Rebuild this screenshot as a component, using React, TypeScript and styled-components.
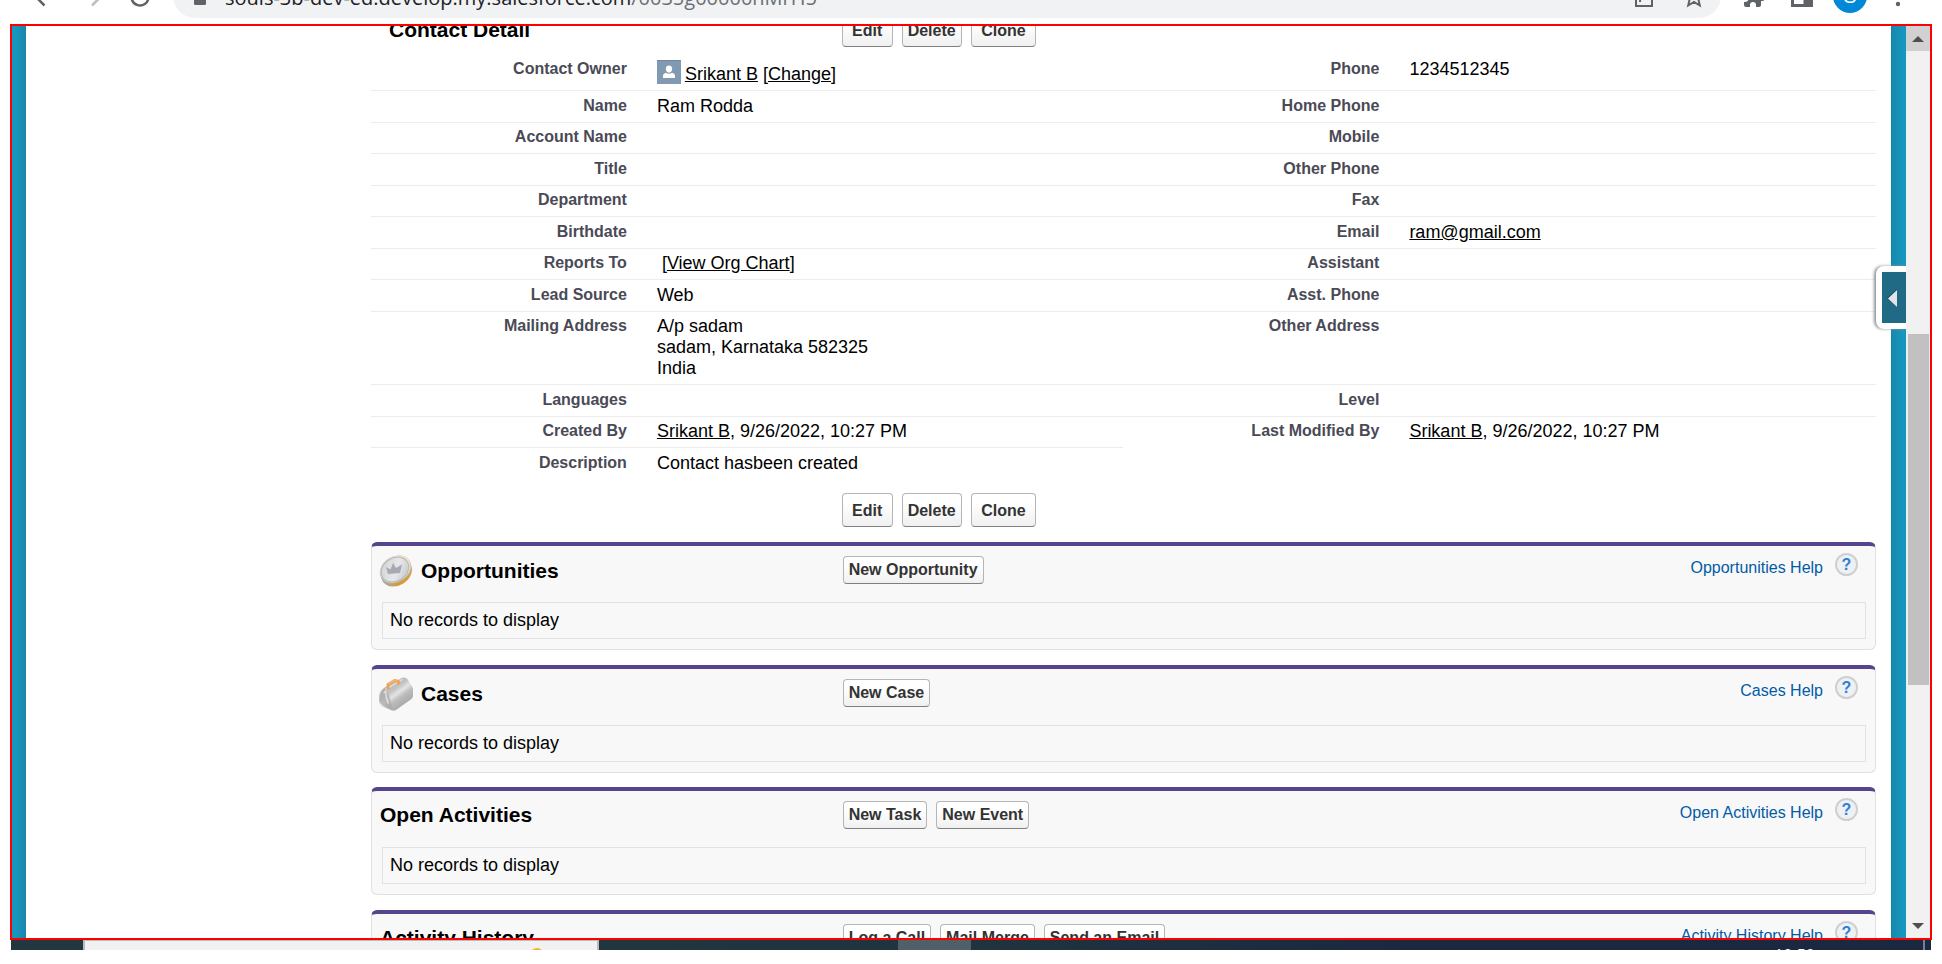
import React from 'react';
import styled, { createGlobalStyle } from 'styled-components';

const GlobalStyle = createGlobalStyle`
  *, *::before, *::after { box-sizing: border-box; }
  body {
    margin: 0;
    background: #fff;
    color: #000;
    font: 18px/21px Arial, "Liberation Sans", sans-serif;
    overflow: hidden;
  }
`;

const Screen = styled.div`
  display: flex;
  flex-direction: column;
  height: 100vh;
  padding-bottom: 14px;
`;

/* ---------- browser toolbar ---------- */

const BrowserBar = styled.header`
  display: flex;
  align-items: flex-end;
  flex: none;
  height: 24px;
  overflow: hidden;
`;

const Toolbar = styled.div`
  display: flex;
  align-items: center;
  flex: 1;
  height: 56px;
  padding: 0 20px;
`;

const ToolButton = styled.button`
  display: flex;
  align-items: center;
  justify-content: center;
  flex: none;
  width: 48px;
  height: 44px;
  padding: 0;
  border: 0;
  background: none;
`;

const AddressPill = styled.div`
  display: flex;
  align-items: center;
  flex: 1;
  height: 44px;
  margin: 0 9px;
  padding: 0 15px 0 21px;
  gap: 26px;
  border-radius: 22px;
  background: #f0f2f4;
`;

const Address = styled.div`
  display: flex;
  align-items: center;
  flex: 1;
  gap: 19px;
  color: #202124;
  font: 20px/28px "Open Sans", "Noto Sans", sans-serif;
`;

const AddressText = styled.span`
  padding-top: 4px;
`;

const AddressPath = styled.span`
  color: #6b6f74;
`;

const PillButton = styled.button`
  display: flex;
  padding: 0;
  border: 0;
  background: none;
`;

const Avatar = styled.span`
  display: flex;
  align-items: center;
  justify-content: center;
  width: 34px;
  height: 34px;
  border-radius: 50%;
  background: #0288d8;
  color: #fff;
  font-size: 20px;
`;

/* ---------- page frame ---------- */

const Frame = styled.div`
  position: relative;
  display: flex;
  flex: 1;
  min-height: 0;
  margin: 0 10px;
  border: 2px solid #ff0000;
`;

const Edge = styled.div<{ $side: 'left' | 'right' }>`
  flex: none;
  width: ${(p) => (p.$side === 'left' ? 14 : 15)}px;
  background: linear-gradient(
    to ${(p) => p.$side},
    #1787ab,
    #1797c0 80%
  );
`;

const Viewport = styled.main`
  flex: 1;
  min-width: 0;
  overflow: hidden;
  padding: 0 15px 0 345px;
`;

const Scrolled = styled.div`
  margin-top: -13px;
`;

/* ---------- buttons ---------- */

const ButtonRow = styled.div`
  display: flex;
  gap: 9px;
`;

const Button = styled.button<{ $large?: boolean }>`
  height: ${(p) => (p.$large ? 34 : 28)}px;
  padding: ${(p) => (p.$large ? 1 : 0)}px 5px 0;
  border: 1px solid #b5b5b5;
  border-bottom-color: #7f7f7f;
  border-radius: 4px;
  background: linear-gradient(#fff 30%, #f0f0f0);
  color: #333;
  font: bold 16px/20px Arial, "Liberation Sans", sans-serif;
  white-space: pre;
`;

/* ---------- contact detail ---------- */

const DetailBar = styled.div<{ $gap: number }>`
  display: flex;
  align-items: center;
  margin-bottom: ${(p) => p.$gap}px;
`;

const TitleCell = styled.div<{ $inset?: number }>`
  display: flex;
  align-items: center;
  gap: 8px;
  flex: none;
  width: calc(31% + 4px);
  padding-left: ${(p) => p.$inset ?? 0}px;
`;

const Heading = styled.h2`
  margin: 0;
  font-size: 21px;
  line-height: 24px;
`;

const DetailTable = styled.table`
  width: 100%;
  margin-bottom: 13px;
  border-spacing: 0;
  table-layout: fixed;
`;

const LabelCol = styled.col`
  width: 18%;
`;

const ValueCol = styled.col`
  width: 32%;
`;

const Row = styled.tr`
  & > * {
    height: 31px;
    padding: 4px 15px 5px;
    vertical-align: top;
  }
  &:nth-child(even) > * {
    height: 32px;
    padding-top: 5px;
  }
`;

const Label = styled.th<{ $line: boolean }>`
  border-bottom: ${(p) => (p.$line ? '1px solid #ececec' : '0')};
  color: #4a4a56;
  font-size: 16px;
  line-height: 19px;
  text-align: right;
`;

const Value = styled.td<{ $line: boolean }>`
  border-bottom: ${(p) => (p.$line ? '1px solid #ececec' : '0')};
`;

const TextLink = styled.a`
  color: #000;
  text-decoration: underline;
`;

const Owner = styled.div`
  display: flex;
  align-items: flex-end;
  gap: 4px;
  height: 26px;
`;

const OwnerIcon = styled.svg`
  flex: none;
  align-self: center;
`;

const Indent = styled.span`
  padding-left: 5px;
`;

/* ---------- related lists ---------- */

const Panel = styled.section`
  height: 108px;
  margin-bottom: 15px;
  border: 1px solid #e0e0e3;
  border-top: 4px solid #56458c;
  border-radius: 6px;
  background: #f8f8f8;
  &:nth-of-type(even) {
    margin-bottom: 14px;
  }
`;

const PanelBar = styled.div`
  display: flex;
  align-items: flex-start;
  height: 56px;
  padding: 0 17px 0 0;
`;

const PanelTitle = styled(TitleCell)<{ $tall: boolean }>`
  width: calc(31% + 10px);
  height: ${(p) => (p.$tall ? 50 : 48)}px;
`;

const PanelButtons = styled(ButtonRow)`
  flex: 1;
  padding-top: 10px;
`;

const HelpLink = styled.a`
  display: flex;
  align-items: flex-start;
  gap: 12px;
  padding-top: 7px;
  color: #015ba7;
  font-size: 16px;
  line-height: 29px;
  text-decoration: none;
`;

const HelpBadge = styled.span`
  display: flex;
  align-items: center;
  justify-content: center;
  width: 23px;
  height: 23px;
  border: 2px solid #cfcfcf;
  border-radius: 50%;
  background: #eef1f4;
  color: #2f7fd8;
  font-weight: bold;
  font-size: 16px;
  line-height: 20px;
`;

const Empty = styled.p`
  margin: 0 9px 0 10px;
  padding: 8px 7px;
  border: 1px solid #e0e3e5;
  line-height: 19px;
`;

/* ---------- scroll bar and drawer tab ---------- */

const ScrollBar = styled.div`
  display: flex;
  flex-direction: column;
  flex: none;
  width: 24px;
  background: #f1f1f1;
`;

const ScrollButton = styled.button<{ $active?: boolean }>`
  display: flex;
  align-items: center;
  justify-content: center;
  flex: none;
  height: 25px;
  padding: 0;
  border: 0;
  background: ${(p) => (p.$active ? '#d1d1d1' : '#f1f1f1')};
`;

const Track = styled.div<{ $grow: number }>`
  flex: ${(p) => p.$grow} 0 0;
`;

const Thumb = styled.div`
  flex: 351 0 0;
  margin: 0 1px 0 2px;
  background: #c1c1c1;
`;

const DrawerTab = styled.button`
  position: absolute;
  top: 240px;
  right: 24px;
  display: flex;
  width: 30px;
  height: 63px;
  padding: 6px 0 6px 6px;
  border: 0;
  border-radius: 8px 0 0 8px;
  background: #fff;
  box-shadow: -2px 0 3px #8f959b;
  clip-path: inset(-4px 0 -4px -6px);
`;

const DrawerFace = styled.span`
  display: flex;
  align-items: center;
  flex: 1;
  padding-left: 4px;
  background: #216a85;
`;

/* ---------- taskbar ---------- */

const TaskBar = styled.footer`
  display: flex;
  flex: none;
  height: 10px;
  margin: 0 11px;
  overflow: hidden;
  background: linear-gradient(to right, #22373f, #20343f 50%, #1a2840 75%);
`;

const SearchBox = styled.div`
  flex: none;
  width: 516px;
  height: 40px;
  margin-left: 72px;
  padding: 7px 53px 0 0;
  border: 2px solid #b9bcbd;
  border-top-width: 1px;
  background: #f1f1f1;
  text-align: right;
`;

const SearchArt = styled.svg`
  vertical-align: top;
`;

const ActiveTask = styled.div`
  flex: none;
  width: 73px;
  margin-left: 299px;
  background: #4f6068;
`;

const Clock = styled.time`
  flex: 1;
  padding: 5px 108px 0 0;
  color: #fff;
  font: 16px/21px "Open Sans", sans-serif;
  text-align: right;
`;

const DesktopEdge = styled.div`
  flex: none;
  width: 8px;
  border-left: 2px solid #76808f;
`;

/* ---------- drawings ---------- */

const CoinIcon = () => (
  <svg width="34" height="34" viewBox="0 0 34 34" aria-hidden="true">
    <defs>
      <linearGradient id="coinEdge" x1="0" y1="0" x2="1" y2="0">
        <stop offset="0" stopColor="#a9aaa8" />
        <stop offset="0.35" stopColor="#d9992f" />
        <stop offset="0.7" stopColor="#d99b3c" />
        <stop offset="1" stopColor="#c9b78e" />
      </linearGradient>
      <linearGradient id="coinFace" x1="0" y1="0" x2="1" y2="1">
        <stop offset="0" stopColor="#cfd1d3" />
        <stop offset="0.55" stopColor="#e6e7e9" />
        <stop offset="1" stopColor="#bfc2c6" />
      </linearGradient>
    </defs>
    <ellipse cx="17.500" cy="18.500" rx="16.500" ry="13" fill="url(#coinEdge)" transform="rotate(-32 17.500 18.500)" />
    <ellipse cx="16.500" cy="15.500" rx="16.500" ry="13" fill="#b4b6b6" transform="rotate(-32 16.500 15.500)" />
    <ellipse cx="16.500" cy="15" rx="16" ry="12.500" fill="#ece2c8" transform="rotate(-32 16.500 15)" />
    <ellipse cx="16" cy="15.500" rx="14.500" ry="11.500" fill="url(#coinFace)" stroke="#b5b7b9" transform="rotate(-32 16 15.500)" />
    <path d="M9 20 7 13l4.500 2.500L14 9l3 5 6-3.500-2 8.500z" fill="#a6aab0" />
  </svg>
);

const CaseIcon = () => (
  <svg width="34" height="36" viewBox="0 0 36 36" aria-hidden="true">
    <defs>
      <linearGradient id="caseBody" x1="0.2" y1="0.1" x2="0.8" y2="0.9">
        <stop offset="0" stopColor="#b4b4b4" />
        <stop offset="0.35" stopColor="#c2c2c2" />
        <stop offset="0.5" stopColor="#e4e4e4" />
        <stop offset="0.65" stopColor="#bdbdbd" />
        <stop offset="1" stopColor="#a2a2a2" />
      </linearGradient>
    </defs>
    <path d="M6 11 23 1.500Q27-.5 30 2l5 8q1 1 1 3v7q0 2-2 3.500L18 35q-2 1-4 .5L3 31Q0 29 0 26v-6q1-6 6-9z" fill="url(#caseBody)" />
    <path d="M6 12Q1 17 1 25q0 3 3 5l10 5q-1-12-6-20z" fill="#a8a8a8" opacity="0.7" />
    <path d="M7 13 25 2.500" stroke="#dcdcdc" strokeWidth="1.500" />
    <path d="M5 17l2-2q0 7 3 13" fill="none" stroke="#e0e0e0" strokeWidth="1.500" />
    <path d="M9.500 13V8L17 3.500l3.500 1V8" fill="none" stroke="#f0a04b" strokeWidth="3" strokeLinejoin="round" />
    <path d="M10 7.500 17 3l2.500.8" fill="none" stroke="#f8c48a" />
  </svg>
);

const PersonIcon = () => (
  <OwnerIcon width="24" height="24" viewBox="0 0 24 24" aria-hidden="true">
    <path fill="#8199b1" d="M0 0h24v24H0z" />
    <path fill="#6f89a3" d="M0 0h24v1H0z" />
    <path fill="#fff" d="M12 5.500c2 0 3.200 1.400 3.200 3.300 0 2-1.300 3.900-3.200 3.900s-3.200-1.900-3.200-3.900c0-1.900 1.200-3.300 3.200-3.300zM9 12.800q3 2 6 0c2 .5 3 1.500 3 3.200v1.500c0 .5-.5.500-1 .5H7c-.5 0-1 0-1-.5V16c0-1.700 1-2.700 3-3.200z" />
  </OwnerIcon>
);

type Pair = [string, React.ReactNode];

const by = (
  <>
    <TextLink href="#user">Srikant B</TextLink>, 9/26/2022, 10:27 PM
  </>
);

const rows: { left: Pair; right?: Pair; leftOnlyLine?: boolean }[] = [
  {
    left: [
      'Contact Owner',
      <Owner key="owner">
        <PersonIcon />
        <span>
          <TextLink href="#user">Srikant B</TextLink> [<TextLink href="#change">Change</TextLink>]
        </span>
      </Owner>,
    ],
    right: ['Phone', '1234512345'],
  },
  { left: ['Name', 'Ram Rodda'], right: ['Home Phone', ''] },
  { left: ['Account Name', ''], right: ['Mobile', ''] },
  { left: ['Title', ''], right: ['Other Phone', ''] },
  { left: ['Department', ''], right: ['Fax', ''] },
  {
    left: ['Birthdate', ''],
    right: ['Email', <TextLink key="mail" href="mailto:ram@gmail.com">ram@gmail.com</TextLink>],
  },
  {
    left: [
      'Reports To',
      <Indent key="org">
        [<TextLink href="#org">View Org Chart</TextLink>]
      </Indent>,
    ],
    right: ['Assistant', ''],
  },
  { left: ['Lead Source', 'Web'], right: ['Asst. Phone', ''] },
  {
    left: [
      'Mailing Address',
      <React.Fragment key="address">
        A/p sadam
        <br />
        sadam, Karnataka 582325
        <br />
        India
      </React.Fragment>,
    ],
    right: ['Other Address', ''],
  },
  { left: ['Languages', ''], right: ['Level', ''] },
  { left: ['Created By', by], right: ['Last Modified By', by], leftOnlyLine: true },
  { left: ['Description', 'Contact hasbeen created'] },
];

const lists: { title: string; icon?: React.ReactNode; actions: string[] }[] = [
  { title: 'Opportunities', icon: <CoinIcon />, actions: ['New Opportunity'] },
  { title: 'Cases', icon: <CaseIcon />, actions: ['New Case'] },
  { title: 'Open Activities', actions: ['New Task', 'New Event'] },
  { title: 'Activity History', actions: ['Log a Call', 'Mail Merge', 'Send an Email'] },
];

const RecordButtons = () => (
  <ButtonRow>
    <Button $large>{' Edit '}</Button>
    <Button $large>Delete</Button>
    <Button $large>{' Clone '}</Button>
  </ButtonRow>
);

const BrowserToolbar = () => (
  <BrowserBar>
    <Toolbar>
      <ToolButton aria-label="Back">
        <svg width="24" height="24" fill="none" stroke="#5f6368" strokeWidth="2.5">
          <path d="M12.500 21.500 3 12l9.500-9.500M3 12h18" />
        </svg>
      </ToolButton>
      <ToolButton aria-label="Forward">
        <svg width="24" height="24" fill="none" stroke="#bcbec1" strokeWidth="2.500">
          <path d="M12 21.500 21.500 12 12 2.500M21 12H3" />
        </svg>
      </ToolButton>
      <ToolButton aria-label="Reload">
        <svg width="24" height="24" fill="none" stroke="#5f6368" strokeWidth="2.500">
          <path d="M18 7a8.500 8.500 0 1 0 2.500 6.500M20 3v7h-7" />
        </svg>
      </ToolButton>
      <AddressPill>
        <Address>
          <svg width="12" height="18" aria-hidden="true">
            <path d="M3 8V4a3 3 0 0 1 6 0v4" fill="none" stroke="#5f6368" strokeWidth="2" />
            <rect y="7" width="12" height="11" rx="1.500" fill="#5f6368" />
          </svg>
          <AddressText>
            souls-3b-dev-ed.develop.my.salesforce.com<AddressPath>/0035g00000hMrH5</AddressPath>
          </AddressText>
        </Address>
        <PillButton aria-label="Share">
          <svg width="24" height="24" fill="none" stroke="#5f6368" strokeWidth="2">
            <path d="M10 5H4v17h16v-6M8 18c0-5 4-8 9-8M14 5l6 5-6 5" />
          </svg>
        </PillButton>
        <PillButton aria-label="Bookmark">
          <svg width="24" height="24" fill="none" stroke="#5f6368" strokeWidth="2">
            <path d="m12 3 2.500 6.500 7 .5-5.300 4.500 1.600 7L12 18l-5.800 3.500 1.600-7L2.500 10l7-.5z" />
          </svg>
        </PillButton>
      </AddressPill>
      <ToolButton aria-label="Extensions">
        <svg width="24" height="24" fill="#5f6368">
          <path d="M20 11h-1V7q0-2-2-2h-4V4a3 3 0 0 0-6 0v1H4Q2 5 2 7v4h1a3 3 0 0 1 0 7H2v3q0 2 2 2h4v-2a3 3 0 0 1 6 0v2h3q2 0 2-2v-4h1a3 3 0 0 0 0-6z" />
        </svg>
      </ToolButton>
      <ToolButton aria-label="Side panel">
        <svg width="24" height="24" fill="none" stroke="#5f6368">
          <path d="M2.500 4.500h19v17h-19z" strokeWidth="3" />
          <path d="M14 5h7v16h-7z" fill="#5f6368" />
        </svg>
      </ToolButton>
      <ToolButton aria-label="Profile">
        <Avatar>S</Avatar>
      </ToolButton>
      <ToolButton aria-label="Menu">
        <svg width="24" height="24" fill="#5f6368">
          <circle cx="12" cy="4" r="2.200" />
          <circle cx="12" cy="12" r="2.200" />
          <circle cx="12" cy="20" r="2.200" />
        </svg>
      </ToolButton>
    </Toolbar>
  </BrowserBar>
);

const ContactDetail = () => (
  <>
    <DetailBar $gap={8}>
      <TitleCell $inset={18}>
        <Heading>Contact Detail</Heading>
      </TitleCell>
      <RecordButtons />
    </DetailBar>
    <DetailTable>
      <colgroup>
        <LabelCol />
        <ValueCol />
        <LabelCol />
        <ValueCol />
      </colgroup>
      <tbody>
        {rows.map(({ left, right, leftOnlyLine }) => {
          const rightLine = !!right && !leftOnlyLine;
          return (
            <Row key={left[0]}>
              <Label scope="row" $line={!!right}>{left[0]}</Label>
              <Value $line={!!right}>{left[1]}</Value>
              {right && (
                <>
                  <Label scope="row" $line={rightLine}>{right[0]}</Label>
                  <Value $line={rightLine}>{right[1]}</Value>
                </>
              )}
            </Row>
          );
        })}
      </tbody>
    </DetailTable>
    <DetailBar $gap={15}>
      <TitleCell />
      <RecordButtons />
    </DetailBar>
  </>
);

export default function App() {
  return (
    <Screen>
      <GlobalStyle />
      <BrowserToolbar />
      <Frame>
        <Edge $side="left" />
        <Viewport>
          <Scrolled>
            <ContactDetail />
            {lists.map(({ title, icon, actions }) => (
              <Panel key={title}>
                <PanelBar>
                  <PanelTitle $inset={icon ? 7 : 8} $tall={!!icon}>
                    {icon}
                    <Heading>{title}</Heading>
                  </PanelTitle>
                  <PanelButtons>
                    {actions.map((action) => (
                      <Button key={action}>{action}</Button>
                    ))}
                  </PanelButtons>
                  <HelpLink href="#help">
                    {title} Help
                    <HelpBadge>?</HelpBadge>
                  </HelpLink>
                </PanelBar>
                <Empty>No records to display</Empty>
              </Panel>
            ))}
          </Scrolled>
        </Viewport>
        <Edge $side="right" />
        <ScrollBar>
          <ScrollButton $active aria-label="Scroll up">
            <svg width="12" height="6" fill="#505050">
              <path d="M0 6 6 0l6 6z" />
            </svg>
          </ScrollButton>
          <Track $grow={283} />
          <Thumb />
          <Track $grow={228} />
          <ScrollButton aria-label="Scroll down">
            <svg width="12" height="6" fill="#505050">
              <path d="M0 0l6 6 6-6z" />
            </svg>
          </ScrollButton>
        </ScrollBar>
        <DrawerTab aria-label="Open sidebar">
          <DrawerFace>
            <svg width="12" height="20" viewBox="0 0 12 20">
              <path d="M11 1v18L1 10z" fill="#164d63" />
              <path d="M11 2v17L2 10.500z" fill="#e2e4e5" />
            </svg>
          </DrawerFace>
        </DrawerTab>
      </Frame>
      <TaskBar>
        <SearchBox>
          <SearchArt width="14" height="14" aria-hidden="true">
            <circle cx="7" cy="7" r="7" fill="#f2b632" />
          </SearchArt>
        </SearchBox>
        <ActiveTask />
        <Clock>10:50</Clock>
        <DesktopEdge />
      </TaskBar>
    </Screen>
  );
}
